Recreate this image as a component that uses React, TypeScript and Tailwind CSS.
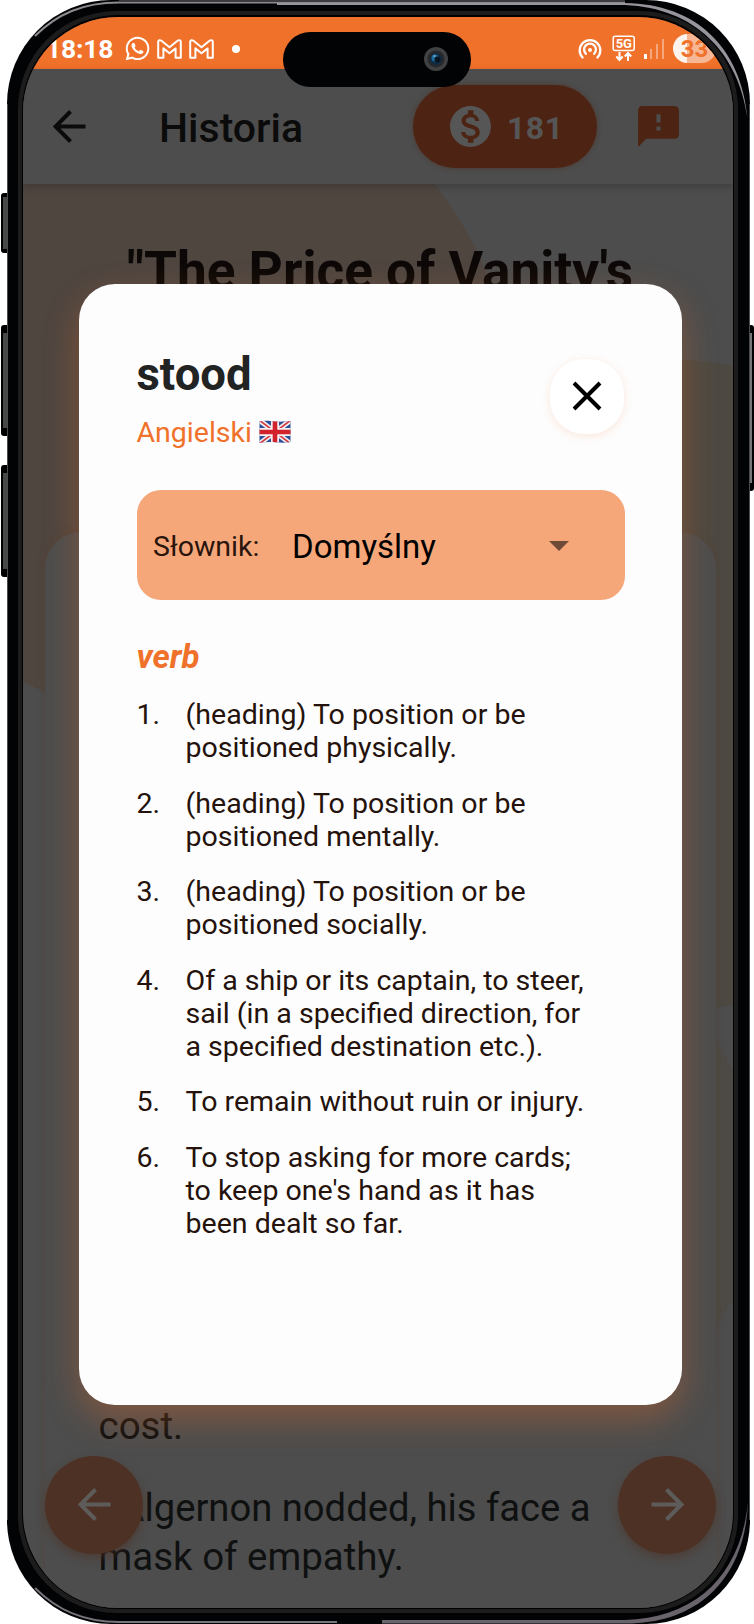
import React from "react";
import { FaWhatsapp } from "react-icons/fa";
import { MdFeedback, MdMonetizationOn } from "react-icons/md";

const definitions = [
  ["(heading) To position or be", "positioned physically."],
  ["(heading) To position or be", "positioned mentally."],
  ["(heading) To position or be", "positioned socially."],
  ["Of a ship or its captain, to steer,", "sail (in a specified direction, for", "a specified destination etc.)."],
  ["To remain without ruin or injury."],
  ["To stop asking for more cards;", "to keep one's hand as it has", "been dealt so far."],
];

function MailIcon() {
  return (
    <svg className="h-[20px] w-[25px] shrink-0" viewBox="0 0 25 20" fill="none" stroke="#fff" strokeWidth="2" strokeLinejoin="round">
      <path d="M1.200 18.800V2.800C1.200 .8 3.200 .8 4.500 1.800L12.500 8.200l8-6.400C21.800 .8 23.800 .8 23.800 2.800V18.800H18.600V9.400L12.500 14.200 6.400 9.400V18.800Z" />
    </svg>
  );
}

function UnionJack() {
  return (
    <svg className="h-[24px] w-[32px]" viewBox="0 0 32 24">
      <clipPath id="flag">
        <path d="M.5 1.500C8 -.5 15 3 31.500 1V22C22 24 12 20.500 .5 23Z" />
      </clipPath>
      <g clipPath="url(#flag)">
        <rect width="32" height="24" fill="#2b4f96" />
        <path d="M0 0L32 24M32 0L0 24" stroke="#f1eef0" strokeWidth="5" />
        <path d="M0 0L32 24M32 0L0 24" stroke="#d33a40" strokeWidth="1.700" />
        <path d="M16 0V24M0 12H32" stroke="#f4f1f2" strokeWidth="8" />
        <path d="M16 0V24M0 12H32" stroke="#d2232d" strokeWidth="4.600" />
      </g>
    </svg>
  );
}

function Arrow({ className, flip = false }: { className: string; flip?: boolean }) {
  return (
    <svg className={className} viewBox="0 0 33 33" fill="none" stroke="currentColor" strokeWidth="4">
      <g transform={flip ? "matrix(-1 0 0 1 33 0)" : undefined}>
        <path d="M32.500 16.500H3M17.500 1.500L2.600 16.500L17.500 31.500" />
      </g>
    </svg>
  );
}

function StatusBar() {
  return (
    <div className="relative flex h-[52px] shrink-0 items-center bg-[#f0712a] pt-3 text-white">
      <span className="ml-[23px] w-[75px] pt-px text-[26.500px] leading-none font-bold tracking-[-0.2px]">18:18</span>
      <FaWhatsapp className="ml-[3px] size-[27px]" />
      <div className="ml-[6px] flex gap-[7px]">
        <MailIcon />
        <MailIcon />
      </div>
      <span className="ml-[18px] size-2 rounded-full bg-white" />
      <div className="ml-auto flex items-center">
        <svg className="h-[23px] w-6" viewBox="0 0 24 23" fill="none" stroke="#fff" strokeWidth="2.300" strokeLinecap="round">
          <path d="M4.600 20.500A10.300 10.300 0 1 1 19.400 20.500M7.900 16.800A5.900 5.900 0 1 1 16.100 16.800" />
          <circle cx="12" cy="13" r="2" fill="#fff" stroke="none" />
        </svg>
        <svg className="ml-[10px] h-[27px] w-[24px]" viewBox="0 0 24 27" fill="none" stroke="#fff" strokeWidth="1.500">
          <rect x="1.200" y="1.200" width="21" height="14.300" rx="2" />
          <text x="11.800" y="13" textAnchor="middle" fontSize="13" fontWeight="700" fill="#fff" stroke="none" className="font-['Roboto',sans-serif]">5G</text>
          <path strokeWidth="2" d="M7.500 17V24.500M4.300 21.500L7.500 25 10.700 21.500M16 26V18.500M12.800 21.500L16 18 19.200 21.500" />
        </svg>
        <div className="ml-[8px] flex items-end gap-[3px]">
          <span className="h-[5px] w-[3px] bg-white" />
          <span className="h-[10px] w-[2px] bg-[#f7a77c]" />
          <span className="mx-px h-[15px] w-[2px] bg-[#f7a77c]" />
          <span className="h-[20px] w-[2px] bg-[#f7a77c]" />
        </div>
        <div className="mr-[17px] ml-[9px] flex h-[29px] w-[43px] items-center justify-center rounded-full bg-linear-to-r from-[#fdf2ec] from-33% to-[#f8b794] to-33% text-[24px] font-bold text-[#f0712a]">33</div>
      </div>
    </div>
  );
}

function AppHeader() {
  return (
    <div className="relative z-10 flex h-[115px] shrink-0 items-center bg-[#4d4d4d] text-[#0b0b0b] shadow-[0_3px_7px_rgba(20,15,15,0.25)]">
      <Arrow className="ml-[30px] size-[33px]" />
      <h1 className="ml-[73px] pt-[6px] text-[41px] font-medium">Historia</h1>
      <div className="ml-auto flex h-[83px] w-[184px] items-center rounded-full bg-[#4d2413] pl-[37px] text-[#565656] shadow-[0_0_5px_rgba(77,36,19,0.5)]">
        <MdMonetizationOn className="-ml-[4px] size-[49px]" />
        <span className="ml-[12px] pt-[3px] text-[32px] font-bold tracking-[0.5px]">181</span>
      </div>
      <MdFeedback className="mr-[50px] ml-[37px] size-[49px] text-[#4d2413]" />
    </div>
  );
}

function Backdrop() {
  return (
    <svg className="absolute inset-0 h-[1423px] w-[710px]" viewBox="0 0 710 1423">
      <path d="M0 0H411C430 23 446 50 459 78C540 290 330 600 22 508L0 498Z" fill="#4f4640" />
      <path d="M600 179C640 172 680 176 710 182V821L693 823H600Z" fill="#4d4942" />
      <path d="M690 846C697 862 704 875 710 888V1116C701 1127 696 1140 690 1160Z" fill="#4d4a45" />
    </svg>
  );
}

function DefinitionDialog() {
  return (
    <section className="absolute top-[267px] left-[56px] z-20 flex h-[1121px] w-[603px] flex-col rounded-[36px] bg-[#fdfdfd] pt-[63px] pr-[57px] pl-[57.500px] shadow-[0_14px_34px_rgba(228,108,42,0.34)]">
      <div className="flex h-[143px] justify-between">
        <div>
          <h2 className="text-[45.500px] leading-[56px] font-bold text-[#222323]">stood</h2>
          <p className="mt-[13px] flex text-[28.500px] leading-[34px] text-[#f0712a]">
            Angielski
            <span className="mt-[4px] ml-[7px]"><UnionJack /></span>
          </p>
        </div>
        <button className="mt-[12px] mr-px flex h-[75px] w-[74px] items-center justify-center rounded-[34px] bg-white shadow-[0_2px_8px_rgba(240,113,42,0.16)]">
          <svg className="size-[30px]" viewBox="0 0 30 30" stroke="#000" strokeWidth="4">
            <path d="M2 2L28 28M28 2L2 28" />
          </svg>
        </button>
      </div>
      <div className="flex h-[110px] shrink-0 items-center rounded-[24px] bg-[#f6a77a]">
        <span className="ml-[16.500px] w-[139px] pt-[6px] text-[28.500px] text-[#2a150c]">Słownik:</span>
        <span className="pt-[5px] text-[33px] text-black">Domyślny</span>
        <svg className="mt-[2px] mr-[56px] ml-auto h-[10px] w-5" viewBox="0 0 20 10"><path d="M0 0H20L10 10Z" fill="#6f4b37" /></svg>
      </div>
      <h3 className="mt-[37px] text-[33px] leading-10 font-bold text-[#f0712a] italic">verb</h3>
      <ol className="mt-[21.500px] flex flex-col gap-[21.700px] text-[28.560px] leading-[33.400px] text-[#24120b]">
        {definitions.map((lines, i) => (
          <li key={i} className="flex">
            <span className="w-[49px] shrink-0">{i + 1}.</span>
            <div className="whitespace-nowrap">
              {lines.map((line) => (
                <p key={line}>{line}</p>
              ))}
            </div>
          </li>
        ))}
      </ol>
    </section>
  );
}

export default function App() {
  return (
    <div className="relative flex h-[1624px] w-[754px] overflow-hidden bg-white pl-[7px] font-['Roboto',sans-serif]">
      <span className="absolute top-[193px] left-px h-[60px] w-[7px] rounded-l-[3px] border-y-4 border-l-2 border-black bg-[#454847]" />
      <span className="absolute top-[325px] left-px h-[111px] w-[7px] rounded-l-[3px] border-y-8 border-l-2 border-black bg-[#454847]" />
      <span className="absolute top-[465px] left-px h-[112px] w-[7px] rounded-l-[3px] border-y-8 border-l-2 border-black bg-[#454847]" />
      <span className="absolute top-[325px] left-[749px] h-[166px] w-[5px] rounded-r-[3px] border-y-8 border-r-2 border-black bg-[#77747a]" />
      <div className="relative h-[1624px] w-[743px] rounded-[104px] bg-[#020305] pt-[11px] pr-[12px] pb-[11px] pl-[11px]">
        <svg className="absolute inset-0 h-[1624px] w-[743px]" viewBox="0 0 743 1624" fill="none">
          <path d="M28 36C50 14 76 2.500 112 2.500H618" stroke="#8d8a90" strokeWidth="2" />
          <path d="M112 1H618" stroke="#3c3a3e" strokeWidth="2" />
          <path d="M270 3H618C690 4 734 48 740.500 118C731 52 688 8 618 5H270Z" fill="#98949b" />
          <path d="M28 1588C50 1610 76 1622 112 1622H330" stroke="#77737b" strokeWidth="2" />
          <path d="M375 1620H618C690 1618 734 1574 741 1502C738 1580 690 1624 618 1623.500H375Z" fill="#69646c" />
          <path d="M.5 104V1520M742.500 104V1520" stroke="#4b4c4e" />
        </svg>
        <div className="relative h-full rounded-[98px] bg-[#1c1c1c] pt-1 pr-1 pb-1 pl-1">
          <div className="h-full rounded-[96px] bg-black pt-[1.500px] pr-px pb-[1.500px] pl-px">
            <div className="relative flex h-[1591px] w-[710px] flex-col overflow-hidden rounded-[95px] bg-[#4d4d4d]">
              <StatusBar />
              <AppHeader />
              <main className="relative flex grow flex-col">
                <Backdrop />
                <h2 className="relative pt-[55px] pl-[104px] text-[53.200px] leading-[64px] font-bold whitespace-nowrap text-[#0c0807]">"The Price of Vanity's</h2>
                <article className="relative mr-[17px] ml-[22px] mt-[229px] grow rounded-t-[36px] bg-[#4d4d4d] px-[53.500px] pt-[870px] text-[38.500px] leading-[48.500px] whitespace-nowrap text-[#0f1010] shadow-[0_0_8px_rgba(90,62,45,0.4)]">
                  <p>cost.</p>
                  <p className="mt-[34px] pl-[11px] text-[38.200px]">"Algernon nodded, his face a</p>
                  <p>mask of empathy.</p>
                </article>
              </main>
              <div className="absolute right-[17px] bottom-[54px] left-[22px] flex justify-between text-[#5e5c5a]">
                <span className="flex size-[98px] items-center justify-center rounded-full bg-[#4d3125] shadow-[0_4px_10px_rgba(77,49,37,0.6)]"><Arrow className="size-[33px]" /></span>
                <span className="flex size-[98px] items-center justify-center rounded-full bg-[#4d3125] shadow-[0_4px_10px_rgba(77,49,37,0.6)]"><Arrow className="size-[33px]" flip /></span>
              </div>
              <DefinitionDialog />
              <div className="absolute top-[15px] left-[260px] z-30 flex h-[55px] w-[188px] items-center justify-end rounded-full bg-[#020305] pr-[23px]">
                <svg className="size-6" viewBox="0 0 24 24">
                  <circle cx="12" cy="12" r="12" fill="#3f4143" />
                  <circle cx="12" cy="12" r="8.500" fill="#26282b" />
                  <circle cx="12" cy="12" r="6" fill="#102b42" />
                  <circle cx="11" cy="11" r="3.500" fill="#1f6d9f" />
                  <circle cx="13.500" cy="12.500" r="3" fill="#091522" />
                  <circle cx="10.500" cy="9" r="1" fill="#7eb4d4" />
                </svg>
              </div>
            </div>
          </div>
        </div>
      </div>
    </div>
  );
}
